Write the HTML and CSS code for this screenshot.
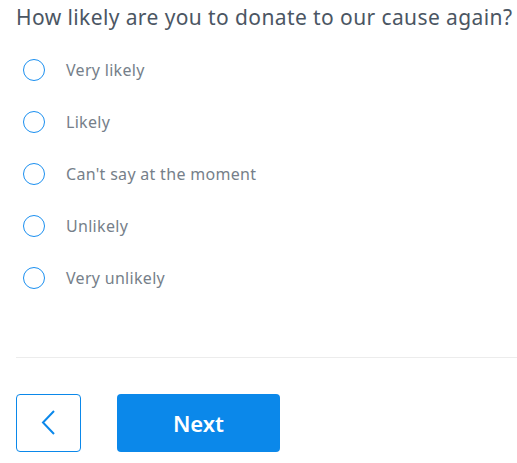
FILE: index.html
```html
<!DOCTYPE html>
<html lang="en">
<head>
  <meta charset="UTF-8">
  <meta name="viewport" content="width=device-width, initial-scale=1.0">
  <title>Survey</title>
  <link rel="stylesheet" href="styles.css">
</head>
<body>

  <!-- Question -->
  <div class="survey">
    <h1 class="question">How likely are you to donate to our cause again?</h1>

    <ul class="options">
      <li class="option"><span class="radio"></span><span class="label">Very likely</span></li>
      <li class="option"><span class="radio"></span><span class="label">Likely</span></li>
      <li class="option"><span class="radio"></span><span class="label">Can't say at the moment</span></li>
      <li class="option"><span class="radio"></span><span class="label">Unlikely</span></li>
      <li class="option"><span class="radio"></span><span class="label">Very unlikely</span></li>
    </ul>

    <hr class="divider">

    <!-- Navigation -->
    <div class="actions">
      <button class="back" aria-label="Back">
        <svg width="16" height="28" viewBox="0 0 16 28">
          <path d="M13 2 L2 13.5 L13 25" fill="none" stroke="#0b88ea" stroke-width="2"/>
        </svg>
      </button>
      <button class="next">Next</button>
    </div>
  </div>

</body>
</html>
```

FILE: styles.css
```css
/* Base */
body {
  margin: 0;
  padding: 0;
  font-family: 'Noto Sans', 'Open Sans', sans-serif;
  background: white;
}

.survey {
  padding-left: 16px;
}

/* Question */
.question {
  margin: 0;
  font-size: 21px;
  font-weight: 400;
  line-height: 34px;
  color: #4b5663;
  white-space: nowrap;
  letter-spacing: 0.4px;
}

/* Options */
.options {
  list-style: none;
  margin: 10px 0 0 0;
  padding: 0;
}

.option {
  display: flex;
  align-items: center;
  height: 52px;
  padding-left: 7px;
}

.radio {
  width: 20px;
  height: 20px;
  border: 1.5px solid #1a8ff0;
  border-radius: 50%;
  flex-shrink: 0;
}

.label {
  margin-left: 21px;
  font-size: 16px;
  color: #767f8a;
  letter-spacing: 0.3px;
}

/* Divider */
.divider {
  border: none;
  border-top: 1px solid #ececec;
  margin: 53px 0 36px 0;
}

/* Buttons */
.actions {
  display: flex;
  gap: 36px;
}

.back {
  width: 65px;
  height: 58px;
  background: white;
  border: 1px solid #0b88ea;
  border-radius: 4px;
  display: flex;
  align-items: center;
  justify-content: center;
  padding: 0;
}

.next {
  width: 163px;
  height: 58px;
  background: #0b88ea;
  color: white;
  border: none;
  border-radius: 4px;
  font-family: inherit;
  font-size: 22px;
  font-weight: 600;
}
```
